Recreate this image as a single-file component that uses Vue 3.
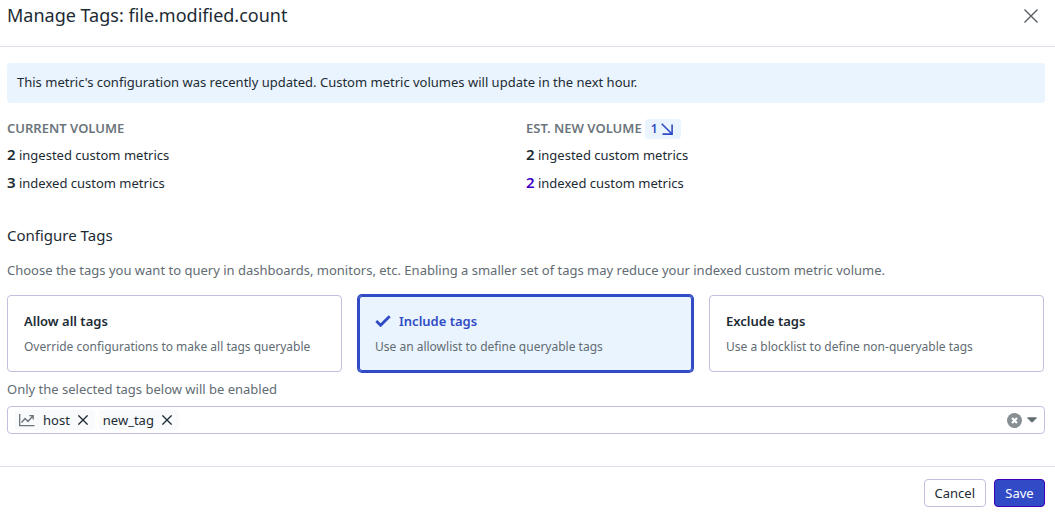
<script setup>
import { ref } from 'vue'

const volumes = [
  { title: 'Current volume', ingested: 2, indexed: 3 },
  { title: 'Est. new volume', ingested: 2, indexed: 2, change: 1 },
]

const modes = [
  { id: 'all', title: 'Allow all tags', text: 'Override configurations to make all tags queryable' },
  { id: 'include', title: 'Include tags', text: 'Use an allowlist to define queryable tags' },
  { id: 'exclude', title: 'Exclude tags', text: 'Use a blocklist to define non-queryable tags' },
]
const mode = ref('include')

const tags = ref([
  { name: 'host', charted: true },
  { name: 'new_tag', charted: false },
])
const query = ref('')

function removeTag(name) {
  tags.value = tags.value.filter((tag) => tag.name !== name)
}
</script>

<template>
  <form class="dialog" @submit.prevent>
    <header class="header">
      <h1>Manage Tags: file.modified.count</h1>
      <button type="button" class="close" aria-label="Close">
        <svg width="14" height="14" viewBox="0 0 14 14"><path d="M.5.5l13 13M13.5.5l-13 13" /></svg>
      </button>
    </header>

    <main class="body">
      <p class="notice">This metric's configuration was recently updated. Custom metric volumes will update in the next hour.</p>

      <div class="volumes">
        <section v-for="volume in volumes" :key="volume.title">
          <h2 class="volume-title">
            <span>{{ volume.title }}</span>
            <span v-if="volume.change" class="change">
              {{ volume.change }}
              <svg width="12" height="12" viewBox="0 0 12 12"><path d="M.7.7l10 10M11.1 1.5v9.6H1.5" /></svg>
            </span>
          </h2>
          <p class="count"><strong>{{ volume.ingested }}</strong> ingested custom metrics</p>
          <p class="count"><strong :class="{ changed: volume.change }">{{ volume.indexed }}</strong> indexed custom metrics</p>
        </section>
      </div>

      <h2 class="section-title">Configure Tags</h2>
      <p class="hint">Choose the tags you want to query in dashboards, monitors, etc. Enabling a smaller set of tags may reduce your indexed custom metric volume.</p>

      <div class="modes" role="radiogroup" aria-label="Configure Tags">
        <label v-for="item in modes" :key="item.id" class="mode" :class="{ selected: mode === item.id }">
          <input v-model="mode" type="radio" name="mode" :value="item.id" />
          <span class="mode-title">
            <svg v-if="mode === item.id" width="16" height="12" viewBox="0 0 16 12"><path d="M1.3 6l4.3 4.3L14.7 1.2" /></svg>
            {{ item.title }}
          </span>
          <span class="mode-text">{{ item.text }}</span>
        </label>
      </div>

      <label class="tags-label" for="tags">Only the selected tags below will be enabled</label>
      <div class="picker">
        <span v-for="tag in tags" :key="tag.name" class="tag">
          <svg v-if="tag.charted" class="chart" width="16" height="14" viewBox="0 0 16 14">
            <path d="M.7 1v11.7H15.5M2.5 9.5L6 5.5l3 3 4.8-5.5M10.3 2.6h3.9v3.8" />
          </svg>
          {{ tag.name }}
          <button type="button" :aria-label="`Remove ${tag.name}`" @click="removeTag(tag.name)">
            <svg width="10" height="10" viewBox="0 0 10 10"><path d="M.4.4l9.2 9.2M9.6.4L.4 9.6" /></svg>
          </button>
        </span>
        <input id="tags" v-model="query" type="text" autocomplete="off" />
        <button type="button" class="clear" aria-label="Clear all tags" @click="tags = []">
          <svg width="15" height="15" viewBox="0 0 14 14"><circle cx="7" cy="7" r="7" /><path d="M4.7 4.7l4.6 4.6M9.3 4.7L4.7 9.3" /></svg>
        </button>
        <button type="button" class="toggle" aria-label="Show tags">
          <svg width="10" height="6" viewBox="0 0 10 6"><path d="M1 .3h8q1 0 .5.9L5.8 5.1Q5 5.8 4.2 5.1L.5 1.2Q0 .3 1 .3z" /></svg>
        </button>
      </div>
    </main>

    <footer class="footer">
      <button type="button" class="button">Cancel</button>
      <button type="submit" class="button primary">Save</button>
    </footer>
  </form>
</template>

<style>
body {
  background: #fff;
}
</style>

<style scoped>
* {
  box-sizing: border-box;
}

.dialog {
  font: 13px/20px "Noto Sans", sans-serif;
  color: #1c2b34;
}

h1,
h2,
p {
  margin: 0;
}

button {
  padding: 0;
  border: 0;
  background: none;
  color: inherit;
  font: inherit;
  cursor: pointer;
}

svg {
  display: block;
  flex: none;
  fill: none;
  stroke: currentColor;
}

.header {
  display: flex;
  align-items: flex-start;
  justify-content: space-between;
  padding: 3px 17px 19px 7px;
  border-bottom: 1px solid #e1dfed;
}

h1 {
  font-size: 18px;
  font-weight: 400;
  line-height: 24px;
}

.close {
  padding-top: 6px;
  color: #585f63;
}

.close svg {
  stroke-width: 1.4;
}

.body {
  padding: 16px 10px 32px 7px;
}

.notice {
  padding: 9px 10px 11px;
  border-radius: 4px;
  background: #eaf4fe;
}

.volumes {
  display: grid;
  grid-template-columns: 1fr 1fr;
  margin-top: 16px;
}

.volume-title {
  display: flex;
  align-items: flex-start;
  gap: 3px;
  min-height: 20px;
  margin-bottom: 2px;
  color: #6c757c;
  font-size: 13px;
  font-weight: 600;
  line-height: 18px;
  text-transform: uppercase;
}

.change {
  display: flex;
  align-items: center;
  gap: 3px;
  padding: 0 8px 0 6px;
  border-radius: 4px;
  background: #eaf4fe;
  color: #304bc5;
  font-size: 12px;
  line-height: 20px;
}

.change svg {
  stroke-width: 1.6;
}

.count {
  line-height: 28px;
}

.count strong {
  font-size: 15px;
  font-weight: 600;
  line-height: 20px;
}

.count .changed {
  color: #4100c8;
}

.section-title {
  margin-top: 28px;
  font-size: 15px;
  font-weight: 400;
  line-height: 20px;
}

.hint,
.tags-label {
  color: #626c73;
}

.hint {
  margin-top: 15px;
}

.modes {
  display: grid;
  grid-template-columns: repeat(3, 1fr);
  gap: 16px;
  margin: 15px 1px 0 0;
}

.mode {
  position: relative;
  display: flex;
  flex-direction: column;
  gap: 6px;
  padding: 15px 16px 14px;
  border: 1px solid #c3bfe0;
  border-radius: 4px;
  cursor: pointer;
}

.mode input {
  position: absolute;
  margin: 0;
  opacity: 0;
}

.mode-title {
  display: flex;
  align-items: center;
  gap: 8px;
  font-weight: 600;
}

.mode-text {
  color: #626c73;
  font-size: 12px;
}

.mode.selected {
  border-color: #304bc5;
  background: #eaf4fe;
  box-shadow: 0 0 0 1px #304bc5, inset 0 0 0 1px #304bc5;
}

.selected .mode-title {
  color: #304bc5;
}

.mode-title svg {
  stroke-width: 2.8;
}

.tags-label {
  display: block;
  margin-top: 7px;
}

.picker {
  display: flex;
  align-items: center;
  gap: 4px;
  margin-top: 7px;
  padding: 3px 7px;
  border: 1px solid #c3bfe0;
  border-radius: 4px;
}

.tag {
  display: flex;
  align-items: center;
  gap: 8px;
  padding: 0 7px 0 4px;
  border-radius: 3px;
  background: #f9fafb;
}

.tag button svg {
  stroke-width: 1.3;
}

.chart {
  color: #6c757c;
  stroke-width: 1.3;
}

.picker input {
  flex: 1;
  min-width: 0;
  height: 20px;
  padding: 0;
  border: 0;
  outline: 0;
  background: none;
  color: inherit;
  font: inherit;
}

.clear circle {
  fill: #878f93;
  stroke: none;
}

.clear path {
  stroke: #fff;
  stroke-width: 2;
}

.toggle {
  margin-left: 1px;
}

.toggle svg {
  fill: #626c73;
  stroke: none;
}

.footer {
  display: flex;
  justify-content: flex-end;
  gap: 8px;
  padding: 12px 10px 6px;
  border-top: 1px solid #e1dfed;
}

.button {
  padding: 3px 10px;
  border: 1px solid #c3bfe0;
  border-radius: 4px;
  background: #fff;
}

.button.primary {
  min-width: 51px;
  border-color: #3d00b8;
  background: #304bc5;
  color: #fff;
}
</style>
